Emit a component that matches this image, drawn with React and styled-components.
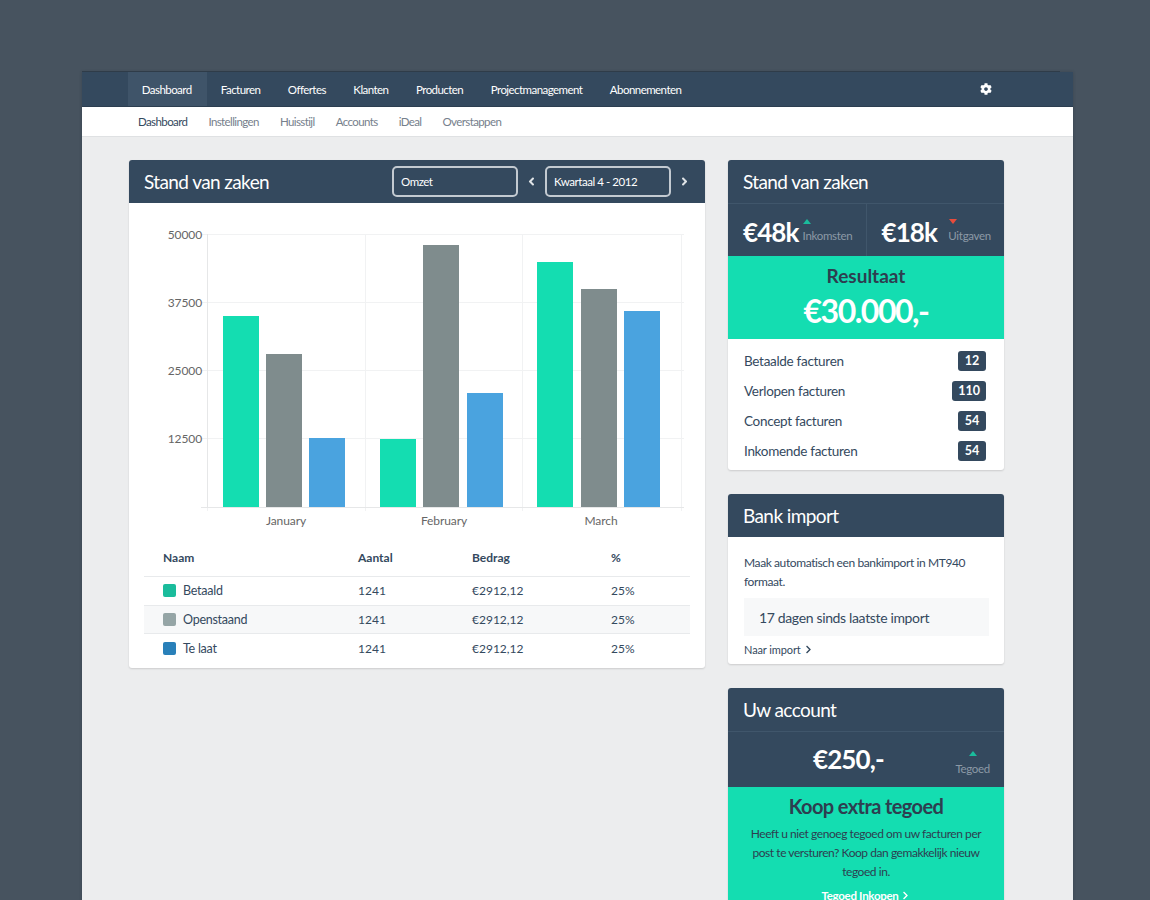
import React from "react";
import styled, { createGlobalStyle } from "styled-components";
import { FaCog, FaAngleLeft, FaAngleRight, FaChevronRight } from "react-icons/fa";

const GlobalStyle = createGlobalStyle`
  html, body {
    margin: 0;
    height: 900px;
    overflow: hidden;
    background: #47535f;
    font-family: "Lato", "Noto Sans", sans-serif;
    color: #34495e;
  }
`;

const Page = styled.div`
  height: 900px;
  overflow: hidden;
  padding: 72px 77px 0 82px;
  box-sizing: border-box;
`;

const Window = styled.div`
  position: relative;
  width: 991px;
  min-height: 828px;
  background: #ecedee;
  box-shadow: 0 0 3px rgba(30, 40, 50, 0.3);

  &::before {
    content: "";
    position: absolute;
    top: -1px;
    left: 0;
    width: 978px;
    height: 1px;
    background: #2f3c49;
  }
`;

const TopNav = styled.nav`
  display: flex;
  align-items: stretch;
  height: 35px;
  box-sizing: border-box;
  padding-left: 46px;
  background: #34495e;
  border-bottom: 1px solid #2c3e50;
`;

const TopLink = styled.a`
  display: flex;
  align-items: center;
  padding: ${({ $active }) => ($active ? "0 15.5px 0 13.75px" : "0 13.75px")};
  font-size: 11.5px;
  letter-spacing: -0.55px;
  color: #fff;
  background: ${({ $active }) => ($active ? "#3f5469" : "transparent")};
`;

const SettingsIcon = styled.span`
  display: flex;
  align-items: center;
  margin-left: auto;
  margin-right: 81px;
  font-size: 12px;
  color: #fff;
`;

const SubNav = styled.nav`
  display: flex;
  align-items: center;
  gap: 21px;
  height: 30px;
  box-sizing: border-box;
  padding-left: 56px;
  background: #fff;
  border-bottom: 1px solid #dfe1e3;
`;

const SubLink = styled.a`
  font-size: 11.5px;
  letter-spacing: -0.6px;
  color: ${({ $active }) => ($active ? "#34495e" : "#76808c")};
`;

const Content = styled.main`
  display: grid;
  grid-template-columns: 576px 276px;
  gap: 23px;
  align-items: start;
  padding: 23px 0 0 47px;
`;

const Column = styled.div`
  display: flex;
  flex-direction: column;
  gap: 24px;
`;

const Card = styled.section`
  background: #fff;
  border-radius: 3px;
  overflow: hidden;
  box-shadow: 0 1px 2px rgba(0, 0, 0, 0.14);
`;

const CardHeader = styled.header`
  display: flex;
  align-items: center;
  height: 43px;
  padding: 0 15px;
  background: #34495e;
`;

const CardTitle = styled.h2`
  margin: 0;
  font-size: 19px;
  font-weight: 400;
  color: #fff;
  letter-spacing: -0.6px;
`;

const Pickers = styled.div`
  display: flex;
  align-items: center;
  margin-left: auto;
  margin-right: -8px;
`;

const Picker = styled.div`
  display: flex;
  align-items: center;
  box-sizing: border-box;
  width: 126px;
  height: 31px;
  padding-left: 7px;
  border: 2px solid #c3cad1;
  border-radius: 5px;
  font-size: 11.5px;
  letter-spacing: -0.45px;
  color: #fff;
`;

const Arrow = styled.span`
  display: flex;
  justify-content: center;
  width: 27px;
  font-size: 13px;
  color: #dfe3e7;
`;

const Chart = styled.svg`
  display: block;
  width: 576px;
  height: 337px;
`;

const ChartLabel = styled.text`
  font-family: "Lato", sans-serif;
  font-size: 12px;
  letter-spacing: -0.1px;
  fill: #666;
`;

const Table = styled.div`
  margin: 0 15px;
  padding-bottom: 5px;
`;

const TableRow = styled.div`
  display: grid;
  grid-template-columns: 195px 114px 139px 1fr;
  align-items: center;
  height: ${({ $head }) => ($head ? "37px" : "28.5px")};
  padding-left: 19px;
  padding-bottom: ${({ $head }) => ($head ? "2px" : 0)};
  box-sizing: border-box;
  font-size: 12px;
  font-weight: ${({ $head }) => ($head ? 700 : 400)};
  color: #34495e;
  background: ${({ $striped }) => ($striped ? "#f7f8f9" : "transparent")};
  border-bottom: 1px solid #e8eaec;

  &:last-child {
    border-bottom: 0;
  }
`;

const NameCell = styled.span`
  display: flex;
  align-items: center;
  gap: 7px;
  font-size: 12.5px;
  letter-spacing: -0.25px;
`;

const Swatch = styled.i`
  display: block;
  width: 13px;
  height: 13px;
  border-radius: 2px;
  background: ${({ $color }) => $color};
`;

const StatRow = styled.div`
  display: flex;
  height: ${({ $tall }) => ($tall ? "55px" : "52px")};
  background: #34495e;
  border-top: 1px solid #40566b;
`;

const Stat = styled.div`
  flex: 1;
  display: flex;
  align-items: center;
  justify-content: space-between;
  padding: ${({ $wide }) => ($wide ? "0 14px 0 85px" : "0 13px 0 15px")};
  & + & {
    border-left: 1px solid #40566b;
  }
`;

const StatValue = styled.strong`
  margin-top: ${({ $flat }) => ($flat ? "-2px" : "4px")};
  font-size: 26px;
  font-weight: 700;
  color: #fff;
  letter-spacing: -0.9px;
`;

const StatNote = styled.div`
  display: flex;
  flex-direction: column;
  align-items: ${({ $center }) => ($center ? "center" : "flex-start")};
  gap: 5.5px;
  margin-top: ${({ $center }) => ($center ? "8px" : "2px")};
  font-size: 11.5px;
  line-height: 14px;
  letter-spacing: -0.3px;
  color: #8c99a6;
`;

const Triangle = styled.i`
  display: block;
  width: 0;
  height: 0;
  margin-left: ${({ $center }) => ($center ? 0 : "0.5px")};
  border-left: 4.5px solid transparent;
  border-right: 4.5px solid transparent;
  ${({ $down }) =>
    $down ? "border-top: 5px solid #e74c3c;" : "border-bottom: 5px solid #1abc9c;"}
`;

const ResultBox = styled.div`
  display: flex;
  flex-direction: column;
  align-items: center;
  height: 83px;
  padding-top: 8px;
  box-sizing: border-box;
  background: #14ddb1;
`;

const ResultLabel = styled.div`
  font-size: 19px;
  font-weight: 700;
  line-height: 24px;
  color: #2d3e50;
`;

const ResultValue = styled.div`
  margin-top: 4px;
  font-size: 32px;
  font-weight: 700;
  line-height: 38px;
  color: #fff;
  letter-spacing: -1.5px;
`;

const InvoiceList = styled.div`
  padding: 7px 18px 4px 16px;
`;

const InvoiceRow = styled.div`
  display: flex;
  align-items: center;
  justify-content: space-between;
  height: 30px;
  font-size: 13.5px;
  letter-spacing: -0.3px;
  color: #34495e;
`;

const Badge = styled.span`
  min-width: 16px;
  padding: 2px 6px;
  border-radius: 3px;
  background: #34495e;
  color: #fff;
  font-size: 12.5px;
  font-weight: 700;
  line-height: 16px;
  letter-spacing: 0;
  text-align: center;
`;

const BankBody = styled.div`
  padding: 16px 15px 5px 16px;
  font-size: 12px;
  line-height: 19px;
  letter-spacing: -0.4px;
  color: #34495e;
`;

const BankStatus = styled.div`
  display: flex;
  align-items: center;
  height: 38px;
  margin: 7px 0 4px;
  padding-left: 15px;
  width: 230px;
  background: #f7f8f9;
  font-size: 14px;
  letter-spacing: -0.35px;
`;

const SmallLink = styled.a`
  display: inline-flex;
  align-items: center;
  gap: 3px;
  font-size: ${({ $light }) => ($light ? "11.5px" : "11px")};
  line-height: ${({ $light }) => ($light ? 1 : "inherit")};
  letter-spacing: ${({ $light }) => ($light ? "-0.3px" : "-0.1px")};
  color: ${({ $light }) => ($light ? "#fff" : "#34495e")};
  font-weight: ${({ $light }) => ($light ? 700 : 400)};
`;

const OfferBox = styled.div`
  height: 140px;
  padding-top: 6px;
  box-sizing: border-box;
  background: #14ddb1;
  text-align: center;
`;

const OfferTitle = styled.h3`
  margin: 0 0 5px;
  font-size: 20px;
  font-weight: 700;
  line-height: 26px;
  letter-spacing: -0.6px;
  color: #2d3e50;
`;

const OfferText = styled.p`
  margin: 0 0 3px;
  padding: 0 15px;
  font-size: 12px;
  line-height: 19px;
  letter-spacing: -0.45px;
  color: #2d3e50;
`;

const gridY = [234, 302, 370, 438, 507];
const gridX = [207, 365, 522, 681];
const yLabels = ["50000", "37500", "25000", "12500"];
const months = [
  { name: "January", x: 286 },
  { name: "February", x: 444 },
  { name: "March", x: 601 },
];
const bars = [
  { x: 223, top: 316, color: "#14ddb1" },
  { x: 266, top: 354, color: "#7f8c8d" },
  { x: 309, top: 438, color: "#4aa3df" },
  { x: 380, top: 439, color: "#14ddb1" },
  { x: 423, top: 245, color: "#7f8c8d" },
  { x: 467, top: 393, color: "#4aa3df" },
  { x: 537, top: 262, color: "#14ddb1" },
  { x: 581, top: 289, color: "#7f8c8d" },
  { x: 624, top: 311, color: "#4aa3df" },
];

const rows = [
  { name: "Betaald", color: "#1abc9c" },
  { name: "Openstaand", color: "#95a5a6" },
  { name: "Te laat", color: "#2980b9" },
];

const invoices = [
  ["Betaalde facturen", 12],
  ["Verlopen facturen", 110],
  ["Concept facturen", 54],
  ["Inkomende facturen", 54],
];

const topLinks = ["Dashboard", "Facturen", "Offertes", "Klanten", "Producten", "Projectmanagement", "Abonnementen"];
const subLinks = ["Dashboard", "Instellingen", "Huisstijl", "Accounts", "iDeal", "Overstappen"];

// chart coordinates below are page pixels, the viewBox shifts them into the card
const RevenueChart = () => (
  <Chart viewBox="129 203 576 337">
    {gridY.map((y) => (
      <line key={y} x1="201" x2="684" y1={y} y2={y} stroke="#f1f2f3" shapeRendering="crispEdges" />
    ))}
    {gridX.map((x) => (
      <line key={x} x1={x} x2={x} y1="234" y2="511" stroke="#f1f2f3" shapeRendering="crispEdges" />
    ))}
    <line x1="207" x2="207" y1="234" y2="507" stroke="#e6e7e8" shapeRendering="crispEdges" />
    <line x1="201" x2="684" y1="507" y2="507" stroke="#e6e7e8" shapeRendering="crispEdges" />
    {bars.map((b) => (
      <rect key={b.x} x={b.x} y={b.top} width="36" height={507 - b.top} fill={b.color} />
    ))}
    {yLabels.map((label, i) => (
      <ChartLabel key={label} x="202" y={gridY[i] + 4.5} textAnchor="end">
        {label}
      </ChartLabel>
    ))}
    {months.map((m) => (
      <ChartLabel key={m.name} x={m.x} y="525" textAnchor="middle">
        {m.name}
      </ChartLabel>
    ))}
  </Chart>
);

export default function App() {
  return (
    <Page>
      <GlobalStyle />
      <Window>
        <TopNav>
          {topLinks.map((link, i) => (
            <TopLink key={link} $active={i === 0}>{link}</TopLink>
          ))}
          <SettingsIcon><FaCog /></SettingsIcon>
        </TopNav>
        <SubNav>
          {subLinks.map((link, i) => (
            <SubLink key={link} $active={i === 0}>{link}</SubLink>
          ))}
        </SubNav>
        <Content>
          <Column>
            <Card>
              <CardHeader>
                <CardTitle>Stand van zaken</CardTitle>
                <Pickers>
                  <Picker>Omzet</Picker>
                  <Arrow><FaAngleLeft /></Arrow>
                  <Picker>Kwartaal 4 - 2012</Picker>
                  <Arrow><FaAngleRight /></Arrow>
                </Pickers>
              </CardHeader>
              <RevenueChart />
              <Table>
                <TableRow $head>
                  <span>Naam</span>
                  <span>Aantal</span>
                  <span>Bedrag</span>
                  <span>%</span>
                </TableRow>
                {rows.map((row, i) => (
                  <TableRow key={row.name} $striped={i === 1}>
                    <NameCell><Swatch $color={row.color} />{row.name}</NameCell>
                    <span>1241</span>
                    <span>€2912,12</span>
                    <span>25%</span>
                  </TableRow>
                ))}
              </Table>
            </Card>
          </Column>
          <Column>
            <Card>
              <CardHeader><CardTitle>Stand van zaken</CardTitle></CardHeader>
              <StatRow>
                <Stat>
                  <StatValue>€48k</StatValue>
                  <StatNote><Triangle />Inkomsten</StatNote>
                </Stat>
                <Stat>
                  <StatValue>€18k</StatValue>
                  <StatNote><Triangle $down />Uitgaven</StatNote>
                </Stat>
              </StatRow>
              <ResultBox>
                <ResultLabel>Resultaat</ResultLabel>
                <ResultValue>€30.000,-</ResultValue>
              </ResultBox>
              <InvoiceList>
                {invoices.map(([label, count]) => (
                  <InvoiceRow key={label}>
                    {label}
                    <Badge>{count}</Badge>
                  </InvoiceRow>
                ))}
              </InvoiceList>
            </Card>
            <Card>
              <CardHeader><CardTitle>Bank import</CardTitle></CardHeader>
              <BankBody>
                Maak automatisch een bankimport in MT940 formaat.
                <BankStatus>17 dagen sinds laatste import</BankStatus>
                <SmallLink>Naar import <FaChevronRight size={9} /></SmallLink>
              </BankBody>
            </Card>
            <Card>
              <CardHeader><CardTitle>Uw account</CardTitle></CardHeader>
              <StatRow $tall>
                <Stat $wide>
                  <StatValue $flat>€250,-</StatValue>
                  <StatNote $center><Triangle $center />Tegoed</StatNote>
                </Stat>
              </StatRow>
              <OfferBox>
                <OfferTitle>Koop extra tegoed</OfferTitle>
                <OfferText>
                  Heeft u niet genoeg tegoed om uw facturen per post te versturen? Koop dan gemakkelijk nieuw tegoed in.
                </OfferText>
                <SmallLink $light>Tegoed Inkopen <FaChevronRight size={9} /></SmallLink>
              </OfferBox>
            </Card>
          </Column>
        </Content>
      </Window>
    </Page>
  );
}
